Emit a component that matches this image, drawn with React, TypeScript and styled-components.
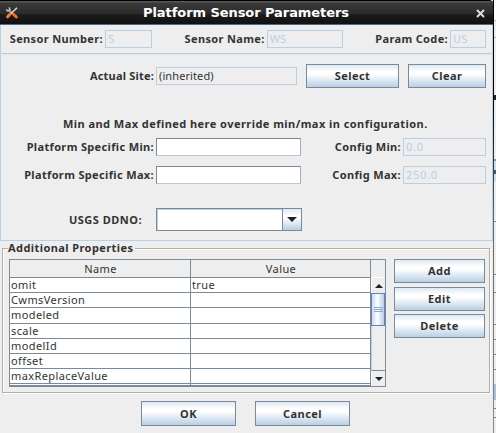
import React from 'react';
import styled, { createGlobalStyle } from 'styled-components';

const Global = createGlobalStyle`
  * { box-sizing: border-box; }
  body { margin: 0; background: #eee; overflow: hidden; }
`;

const Screen = styled.div`
  display: flex;
  width: 496px;
  height: 433px;
  overflow: hidden;
  color: #333;
  font: 11px/14px "Noto Sans", "Open Sans", sans-serif;
  white-space: nowrap;
`;
const Dialog = styled.main`
  width: 493px;
  height: 433px;
  background: #eee;
`;
const Edge = styled.div`
  width: 1px;
  background: linear-gradient(#000 0 100px, #666 220px, #888);
`;
const Behind = styled.div`
  width: 2px;
  background: linear-gradient(#fff 0 20px, #9bb4cf 20px 21px, #eee 21px 37px, #9bb4cf 37px 38px, #eee 38px 95px, #222 95px 100px, #eee 100px 159px, #7a9cc0 159px 161px, #cbdcec 161px 170px, #555 170px 174px, #cbdcec 174px 182px, #eee 182px 221px, #888 221px 222px, #eee 222px 274px, #7a8a99 274px 275px, #eee 275px 292px, #7a8a99 292px 293px, #eee 293px 324px, #7a8a99 324px 325px, #eee 325px 339px, #7a8a99 339px 340px, #eee 340px 354px, #7a8a99 354px 355px, #eee 355px 369px, #7a8a99 369px 370px, #eee 370px 384px, #a9c2da 384px 400px, #eee 400px 408px, #888 408px 409px, #eee 409px 417px, #888 417px 418px, #eee 418px);
`;
const TitleBar = styled.header`
  display: flex;
  align-items: center;
  width: 494px;
  height: 25px;
  padding: 1px 9px 0 5px;
  border-top: 1px solid #000;
  border-bottom: 1px solid #4a6a94;
  border-top-right-radius: 5px;
  background: linear-gradient(#555 0 1px, #3b3b3b 2px, #2b2b2b 55%, #1b1b1b 60%, #111);
`;
const Title = styled.h1`
  flex: 1;
  margin: 0;
  padding-right: 3px;
  color: #fff;
  text-align: center;
  font: bold 13px/16px "DejaVu Sans", sans-serif;
  letter-spacing: -0.07px;
`;
const Label = styled.span<{ w?: number; track?: number }>`
  flex: none;
  width: ${p => (p.w ? `${p.w}px` : 'auto')};
  margin-right: 2px;
  text-align: right;
  font-weight: bold;
  letter-spacing: ${p => p.track ?? 0.35}px;
`;
const Field = styled.div<{ w: number; kind?: 'edit' | 'off'; track?: number }>`
  flex: none;
  width: ${p => p.w}px;
  height: 18px;
  padding: 1px 2px;
  border: 1px solid ${p => (p.kind === 'edit' ? '#7a8a99' : '#b8cfe5')};
  ${p => p.kind === 'edit' && 'border-right-color: #9fb0c0; border-bottom-color: #b8c5d2;'}
  background: ${p => (p.kind === 'edit' ? '#fff' : '#eee')};
  color: ${p => (p.kind === 'off' ? '#b8cfe5' : '#333')};
  letter-spacing: ${p => p.track ?? 0.1}px;
`;
const Identity = styled.section`
  display: flex;
  align-items: flex-start;
  justify-content: space-between;
  height: 29px;
  padding: 5px 6px 0 8px;
  border: 1px solid #b8cfe5;
  border-top: 0;
`;
const Pair = styled.div`
  display: flex;
  align-items: center;
`;
const Details = styled.section`
  height: 187px;
  padding: 9px 6px 0 0;
  border: 1px solid #b8cfe5;
  border-top-color: #dce8f4;
`;
const Line = styled.div<{ h: number; gap?: number }>`
  display: flex;
  align-items: center;
  justify-content: space-between;
  height: ${p => p.h}px;
  margin-top: ${p => p.gap ?? 0}px;
`;
const Note = styled.p`
  margin: 29px 0 7px 62px;
  font-weight: bold;
  letter-spacing: 0.45px;
`;
const Button = styled.button<{ w: number; h?: number }>`
  flex: none;
  width: ${p => p.w}px;
  height: ${p => p.h ?? 24}px;
  margin: 0;
  padding: 0;
  border: 1px solid #7a8a99;
  outline: 0;
  background: linear-gradient(#dde8f3, #fff 30%, #fff 42%, #b8cfe5);
  color: #333;
  font: bold 11px/14px "Noto Sans", sans-serif;
  letter-spacing: 0.45px;
`;
const Combo = styled.div`
  display: flex;
  width: 146px;
  height: 23px;
  border: 1px solid #7a8a99;
  background: #fff;
  box-shadow: inset 1px 1px #b8cfe5;
`;
const ComboArrow = styled.div`
  display: flex;
  align-items: center;
  justify-content: center;
  width: 19px;
  margin-left: auto;
  border-left: 1px solid #7a8a99;
  background: linear-gradient(#dde8f3, #fff 30%, #fff 42%, #b8cfe5);
`;
const Group = styled.fieldset`
  display: flex;
  justify-content: space-between;
  width: 488px;
  height: 151px;
  margin: 1px 0 0 2px;
  padding: 5px 3px 0 6px;
  border: 1px solid #b0afa6;
  box-shadow: inset 1px 1px #fff, 1px 1px #fff;
`;
const Legend = styled.legend`
  height: 12px;
  margin-left: -1px;
  padding: 0 2px 0 0;
  background: #eee;
  font-weight: bold;
  line-height: 12px;
  letter-spacing: 0.42px;
`;
const ScrollPane = styled.div`
  display: flex;
  width: 377px;
  height: 128px;
  border: 1px solid #7a8a99;
`;
const Table = styled.div`
  display: grid;
  grid-template-columns: 181px 180px;
  grid-template-rows: 18px 15px 15px 16px 15px 15px 15px 15px 2px;
  width: 361px;
  background: #fff;
`;
const Cell = styled.div<{ head?: boolean }>`
  padding-left: 1px;
  overflow: hidden;
  border-right: 1px solid #7a8a99;
  border-bottom: 1px solid #7a8a99;
  background: ${p => (p.head ? '#eee' : '#fff')};
  text-align: ${p => (p.head ? 'center' : 'left')};
  line-height: ${p => (p.head ? 18 : 14)}px;
  letter-spacing: 0.4px;
`;
const ScrollBar = styled.div`
  display: flex;
  flex-direction: column;
  width: 14px;
  background: #eee;
`;
const Corner = styled.div`
  height: 18px;
  border-bottom: 1px solid #fff;
`;
const ArrowBox = styled.div`
  display: flex;
  align-items: center;
  justify-content: center;
  height: 15px;
  border-left: 1px solid #fff;
`;
const Thumb = styled.div`
  display: flex;
  align-items: center;
  justify-content: center;
  height: 33px;
  border: 1px solid #6382bf;
  background: linear-gradient(90deg, #c8daed, #fff 45%, #b8cfe5);
`;
const Track = styled.div`
  flex: 1;
  border-left: 1px solid #c5ced6;
  border-bottom: 1px solid #7a8a99;
`;
const Actions = styled.div`
  display: flex;
  flex-direction: column;
  gap: 3.5px;
  width: 92px;
`;
const Footer = styled.footer`
  display: flex;
  justify-content: center;
  gap: 19px;
  padding: 8px 2px 0 0;
`;

const Arrow = ({ up, size = 8 }: { up?: boolean; size?: number }) => (
  <svg width={size} height={size / 2} viewBox="0 0 8 4">
    <path d={up ? 'M0 4L4 0L8 4Z' : 'M0 0H8L4 4Z'} fill="#222" />
  </svg>
);
const Tools = () => (
  <svg width="14" height="14" viewBox="0 0 14 14" fill="none">
    <path d="M3.8 4.2L8 8" stroke="#aaa" strokeWidth="1.8" />
    <path d="M1.2 3.4L3 5L5 3.6L4 1.4" stroke="#c5c5c5" strokeWidth="1.4" />
    <path d="M12 1.8L5.5 8" stroke="#ddd" strokeWidth="1.5" />
    <path d="M5 8.2L2.6 10.8" stroke="#f47a25" strokeWidth="3" strokeLinecap="round" />
    <path d="M8.8 8.6L11.4 11" stroke="#fa6b1c" strokeWidth="3" strokeLinecap="round" />
  </svg>
);
const Close = () => (
  <svg width="9" height="9" viewBox="0 0 9 9">
    <path d="M1 1L8 8M8 1L1 8" stroke="#ddd" strokeWidth="2" />
  </svg>
);

const properties = [
  ['omit', 'true'], ['CwmsVersion', ''], ['modeled', ''], ['scale', ''],
  ['modelId', ''], ['offset', ''], ['maxReplaceValue', ''], ['', ''],
];

export default function App() {
  return (
    <Screen>
      <Global />
      <Dialog>
        <TitleBar><Tools /><Title>Platform Sensor Parameters</Title><Close /></TitleBar>
        <Identity>
          <Pair><Label w={94} track={0.35}>Sensor Number:</Label><Field w={47} kind="off">5</Field></Pair>
          <Pair><Label>Sensor Name:</Label><Field w={76} kind="off">WS</Field></Pair>
          <Pair><Label>Param Code:</Label><Field w={36} kind="off">US</Field></Pair>
        </Identity>
        <Details>
          <Line h={24}>
            <Pair><Label w={153} track={0.2}>Actual Site:</Label><Field w={141}>(inherited)</Field></Pair>
            <Button w={93}>Select</Button>
            <Button w={78}>Clear</Button>
          </Line>
          <Note>Min and Max defined here override min/max in configuration.</Note>
          <Line h={18}>
            <Pair><Label w={153}>Platform Specific Min:</Label><Field w={145} kind="edit" /></Pair>
            <Pair><Label>Config Min:</Label><Field w={83} kind="off" track={0.75}>0.0</Field></Pair>
          </Line>
          <Line h={18} gap={10}>
            <Pair><Label w={153}>Platform Specific Max:</Label><Field w={145} kind="edit" /></Pair>
            <Pair><Label>Config Max:</Label><Field w={83} kind="off" track={0.75}>250.0</Field></Pair>
          </Line>
          <Line h={23} gap={24}>
            <Pair>
              <Label w={141} track={0.5}>USGS DDNO:</Label>
              <Label w={10} />
              <Combo><ComboArrow><Arrow size={10} /></ComboArrow></Combo>
            </Pair>
          </Line>
        </Details>
        <Group>
          <Legend>Additional Properties</Legend>
          <ScrollPane>
            <Table>
              <Cell head>Name</Cell><Cell head>Value</Cell>
              {properties.map(([name, value], i) => (
                <React.Fragment key={i}><Cell>{name}</Cell><Cell>{value}</Cell></React.Fragment>
              ))}
            </Table>
            <ScrollBar>
              <Corner />
              <ArrowBox><Arrow up /></ArrowBox>
              <Thumb>
                <svg width="9" height="7" viewBox="0 0 9 7"><path d="M0 1.5H9M0 3.5H9M0 5.5H9" stroke="#8aa8dc" /></svg>
              </Thumb>
              <Track />
              <ArrowBox><Arrow /></ArrowBox>
            </ScrollBar>
          </ScrollPane>
          <Actions>
            <Button w={91}>Add</Button>
            <Button w={91}>Edit</Button>
            <Button w={91}>Delete</Button>
          </Actions>
        </Group>
        <Footer>
          <Button w={95} h={25}>OK</Button>
          <Button w={95} h={25}>Cancel</Button>
        </Footer>
      </Dialog>
      <Edge />
      <Behind />
    </Screen>
  );
}
